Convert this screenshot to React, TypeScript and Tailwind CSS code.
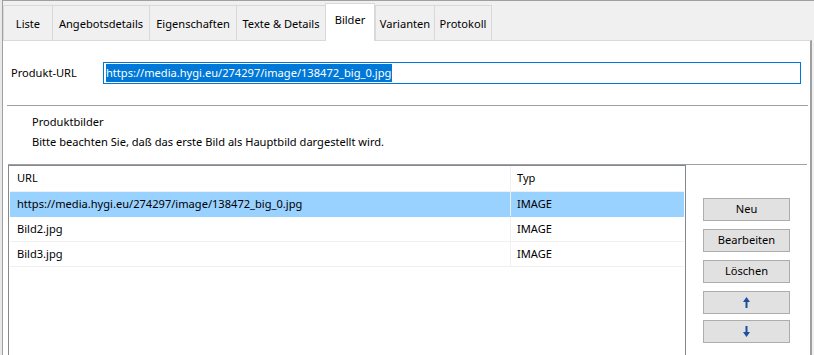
import React from "react";

const tabs = [
  { label: "Liste", w: 49 },
  { label: "Angebotsdetails", w: 97 },
  { label: "Eigenschaften", w: 87 },
  { label: "Texte & Details", w: 89 },
  { label: "Bilder", w: 50, active: true },
  { label: "Varianten", w: 59 },
  { label: "Protokoll", w: 58 },
];

const rows = [
  { url: "https://media.hygi.eu/274297/image/138472_big_0.jpg", typ: "IMAGE", sel: true },
  { url: "Bild2.jpg", typ: "IMAGE" },
  { url: "Bild3.jpg", typ: "IMAGE" },
];

function Arrow({ up }: { up?: boolean }) {
  return (
    <svg width="7" height="11" viewBox="0 0 7 11" className={up ? "" : "rotate-180"}>
      <path d="M3.5 0 L7 5 L4.5 5 L4.5 11 L2.5 11 L2.5 5 L0 5 Z" fill="#1c4f9c" />
    </svg>
  );
}

function Btn({ children }: { children: React.ReactNode }) {
  return (
    <div className="w-[87px] h-[23px] bg-[#e1e1e1] border border-[#adadad] flex items-center justify-center text-black">
      {children}
    </div>
  );
}

export default function App() {
  return (
    <div
      className="w-[814px] h-[355px] overflow-hidden bg-[#f0f0f0] flex text-[11.1px] text-black"
      style={{ fontFamily: '"Noto Sans", "Liberation Sans", sans-serif' }}
    >
      <div className="w-[2px] h-full bg-[#e9e9e9]" />
      <div className="w-[1px] h-full bg-[#a0a0a0]" />
      <div className="flex-1 flex flex-col">
        <div className="h-[1px] bg-[#a0a0a0]" />
        <div className="h-[39px] flex items-end bg-[#f0f0f0]">
          {tabs.map((t) =>
            t.active ? (
              <div
                key={t.label}
                style={{ width: t.w }}
                className="h-[38px] bg-white border-x border-t border-[#d9d9d9] flex justify-center pt-[8px] leading-[16px] relative z-10 -mb-[1px]"
              >
                {t.label}
              </div>
            ) : (
              <div
                key={t.label}
                style={{ width: t.w }}
                className="h-[35px] border-l border-t border-[#d9d9d9] last:border-r flex items-center justify-center leading-[16px] pt-[1px]"
              >
                {t.label}
              </div>
            )
          )}
        </div>
        <div className="flex-1 flex flex-col bg-white border-t border-[#d9d9d9] border-r-2 border-r-[#a0a0a0] mr-[2px]">
          <div className="h-[64px] flex items-center pl-[8px]">
            <div className="w-[92px]">Produkt-URL</div>
            <div className="w-[698px] h-[22px] border border-[#0078d7] flex items-center px-[2px]">
              <span className="bg-[#0078d7] text-white leading-[18px] pr-[1px]">
                https://media.hygi.eu/274297/image/138472_big_0.jpg
              </span>
            </div>
          </div>
          <div className="h-[1px] bg-[#a0a0a0] ml-[4px] mr-[2px]" />
          <div className="h-[58px] flex flex-col pl-[29px] pt-[8px] gap-[4px] leading-[16px]">
            <div>Produktbilder</div>
            <div>Bitte beachten Sie, daß das erste Bild als Hauptbild dargestellt wird.</div>
          </div>
          <div className="h-[1px] bg-[#a0a0a0] ml-[5px] mr-[3px]" />
          <div className="flex-1 flex pl-[5px]">
            <div className="w-[678px] border-l border-t border-r border-[#828790] bg-white flex flex-col pl-[1px] pr-[1px]">
              <div className="h-[26px] flex border-b border-[#f0f0f0] items-center">
                <div className="w-[501px] h-full border-r border-[#f0f0f0] flex items-center pl-[7px]">URL</div>
                <div className="pl-[6px]">Typ</div>
              </div>
              {rows.map((r) => (
                <div
                  key={r.url}
                  className={`h-[25px] flex border-b ${r.sel ? "bg-[#99d1ff] border-[#99d1ff]" : "border-[#f0f0f0]"}`}
                >
                  <div className="w-[501px] h-full border-r border-[#f0f0f0] flex items-center pl-[7px]">{r.url}</div>
                  <div className="flex items-center pl-[6px]">{r.typ}</div>
                </div>
              ))}
            </div>
            <div className="flex flex-col pl-[17px] pt-[33px] gap-[8px]">
              <Btn>Neu</Btn>
              <Btn>Bearbeiten</Btn>
              <Btn>Löschen</Btn>
              <Btn><Arrow up /></Btn>
              <div className="-mt-[2px]">
                <Btn><Arrow /></Btn>
              </div>
            </div>
          </div>
        </div>
      </div>
    </div>
  );
}
